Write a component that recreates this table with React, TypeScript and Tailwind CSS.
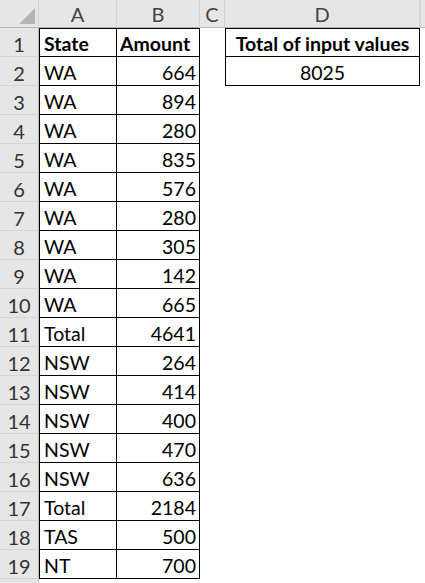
import React from 'react';

const rows: [string, string][] = [
  ['State', 'Amount'],
  ['WA', '664'],
  ['WA', '894'],
  ['WA', '280'],
  ['WA', '835'],
  ['WA', '576'],
  ['WA', '280'],
  ['WA', '305'],
  ['WA', '142'],
  ['WA', '665'],
  ['Total', '4641'],
  ['NSW', '264'],
  ['NSW', '414'],
  ['NSW', '400'],
  ['NSW', '470'],
  ['NSW', '636'],
  ['Total', '2184'],
  ['TAS', '500'],
  ['NT', '700'],
];

const colHead = 'flex items-center justify-center pt-[1px] bg-[#e6e6e6] border-r border-b border-r-[#d4d4d4] border-b-[#b8b8b8] text-[20px] text-[#444]';
const rowHead = 'flex items-center justify-center pt-[3px] bg-[#e6e6e6] border-r border-b border-r-[#b8b8b8] border-b-[#d4d4d4] text-[20px] text-[#333]';

export default function App() {
  return (
    <div className="w-[425px] h-[583px] overflow-hidden bg-white font-['Lato',sans-serif]">
      <div className="grid grid-cols-[39px_78px_83px_25px_195px_1fr] grid-rows-[28px_repeat(20,29px)]">
        {/* column headers */}
        <div className="relative bg-[#e6e6e6] border-r border-b border-r-[#d4d4d4] border-b-[#b8b8b8]">
          <svg className="absolute right-[3px] bottom-[3px]" width="16" height="16" viewBox="0 0 16 16">
            <polygon points="16,0 16,16 0,16" fill="#b4b4b4" />
          </svg>
        </div>
        <div className={colHead}>A</div>
        <div className={colHead}>B</div>
        <div className={colHead}>C</div>
        <div className={colHead}>D</div>
        <div className="bg-[#e6e6e6] border-b border-b-[#b8b8b8] border-l border-l-[#d4d4d4]" />

        {rows.map(([a, b], i) => (
          <React.Fragment key={i}>
            <div className={rowHead}>{i + 1}</div>
            <div
              className={`flex items-center pt-[3px] pl-[4px] border-l border-r border-b border-black text-[19.5px] text-black ${i === 0 ? 'font-bold border-t' : ''}`}
            >
              {a}
            </div>
            <div
              className={`flex items-center pt-[3px] border-r border-b border-black text-[19.5px] text-black ${i === 0 ? 'font-bold border-t pl-[3px]' : 'justify-end pr-[3px]'}`}
            >
              {b}
            </div>
            <div />
            {i === 0 ? (
              <div className="flex items-center justify-center pt-[3px] border border-black font-bold text-[19.5px] text-black whitespace-nowrap">
                Total of input values
              </div>
            ) : i === 1 ? (
              <div className="flex items-center justify-center pt-[3px] border-l border-r border-b border-black text-[19.5px] text-black">
                8025
              </div>
            ) : (
              <div />
            )}
            <div />
          </React.Fragment>
        ))}
        <div className="bg-[#e6e6e6] border-r border-r-[#b8b8b8]" />
      </div>
    </div>
  );
}
